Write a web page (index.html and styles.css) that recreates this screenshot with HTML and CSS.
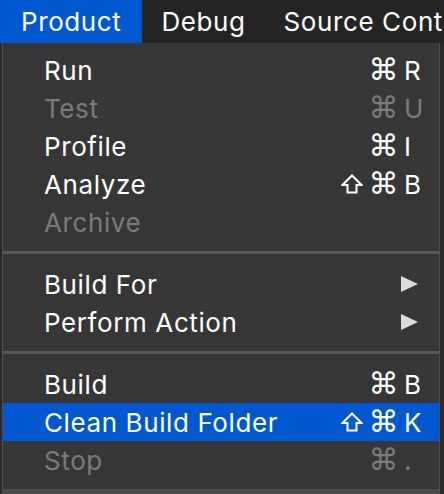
FILE: index.html
```html
<!DOCTYPE html>
<html lang="en">
<head>
    <meta charset="UTF-8">
    <meta name="viewport" content="width=device-width, initial-scale=1.0">
    <title>Product menu</title>
    <link rel="stylesheet" href="styles.css">
</head>
<body>
    <nav class="menubar">
        <span class="menubar-item active">Product</span>
        <span class="menubar-item">Debug</span>
        <span class="menubar-item">Source Control</span>
    </nav>
    <div class="stage">
        <ul class="menu">
            <li class="menu-item"><span class="label">Run</span><span class="shortcut"><span class="cmd">⌘</span><span class="key">R</span></span></li>
            <li class="menu-item disabled"><span class="label">Test</span><span class="shortcut"><span class="cmd">⌘</span><span class="key">U</span></span></li>
            <li class="menu-item"><span class="label">Profile</span><span class="shortcut"><span class="cmd">⌘</span><span class="key">I</span></span></li>
            <li class="menu-item"><span class="label">Analyze</span><span class="shortcut"><svg class="shift" width="22" height="20" viewBox="0 0 22 20"><path d="M11 1.5 L20.5 11 H15.5 V18.5 H6.5 V11 H1.5 Z" fill="none" stroke="currentColor" stroke-width="2" stroke-linejoin="miter"/></svg><span class="cmd">⌘</span><span class="key">B</span></span></li>
            <li class="menu-item disabled"><span class="label">Archive</span></li>
            <li class="separator"></li>
            <li class="menu-item"><span class="label">Build For</span><svg class="submenu" width="17" height="16" viewBox="0 0 17 16"><path d="M0 0 L17 8 L0 16 Z" fill="#dcdcdc"/></svg></li>
            <li class="menu-item"><span class="label">Perform Action</span><svg class="submenu" width="17" height="16" viewBox="0 0 17 16"><path d="M0 0 L17 8 L0 16 Z" fill="#dcdcdc"/></svg></li>
            <li class="separator"></li>
            <li class="menu-item"><span class="label">Build</span><span class="shortcut"><span class="cmd">⌘</span><span class="key">B</span></span></li>
            <li class="menu-item selected"><span class="label">Clean Build Folder</span><span class="shortcut"><svg class="shift" width="22" height="20" viewBox="0 0 22 20"><path d="M11 1.5 L20.5 11 H15.5 V18.5 H6.5 V11 H1.5 Z" fill="none" stroke="currentColor" stroke-width="2" stroke-linejoin="miter"/></svg><span class="cmd">⌘</span><span class="key">K</span></span></li>
            <li class="menu-item disabled"><span class="label">Stop</span><span class="shortcut"><span class="cmd">⌘</span><span class="key">.</span></span></li>
        </ul>
    </div>
</body>
</html>
```

FILE: styles.css
```css
body {
    margin: 0;
    padding: 0;
    width: 444px;
    height: 494px;
    overflow: hidden;
    background-color: #1c1c1c;
    font-family: Inter, "Noto Sans", sans-serif;
    color: #ffffff;
}
.menubar {
    display: flex;
    height: 43px;
    background-color: #242424;
    white-space: nowrap;
    overflow: hidden;
}
.menubar-item {
    display: flex;
    align-items: center;
    padding: 0 19px 0 19px;
    font-size: 26px;
    letter-spacing: 0.6px;
    color: #ffffff;
}
.menubar-item.active {
    background-color: #0058d1;
    padding-left: 21px;
    padding-right: 21px;
}
.stage {
    display: flex;
    padding-left: 2px;
    background-color: #2a2a2a;
}
.menu {
    list-style: none;
    margin: 0;
    padding: 8px 0 10px;
    width: 436px;
    background-color: #363636;
    border-left: 1px solid #4f4f4f;
    border-right: 1px solid #505050;
    border-bottom: 5px solid #4c4c4c;
}
.menu-item {
    display: flex;
    align-items: center;
    justify-content: space-between;
    height: 38px;
    padding: 0 17px 0 41px;
    font-size: 26px;
    letter-spacing: 0.6px;
}
.menu-item.disabled {
    color: #7b7b7b;
}
.menu-item.selected {
    background-color: #0058d1;
}
.shortcut {
    display: flex;
    align-items: center;
}
.shift {
    margin-right: 5px;
}
.cmd {
    font-family: "DejaVu Sans", sans-serif;
    font-size: 30px;
    line-height: 1;
}
.key {
    width: 18px;
    padding-left: 5px;
}
.submenu {
    margin-right: 4px;
}
.separator {
    height: 3px;
    margin: 10px 0 11px;
    background-color: #565656;
}
```
